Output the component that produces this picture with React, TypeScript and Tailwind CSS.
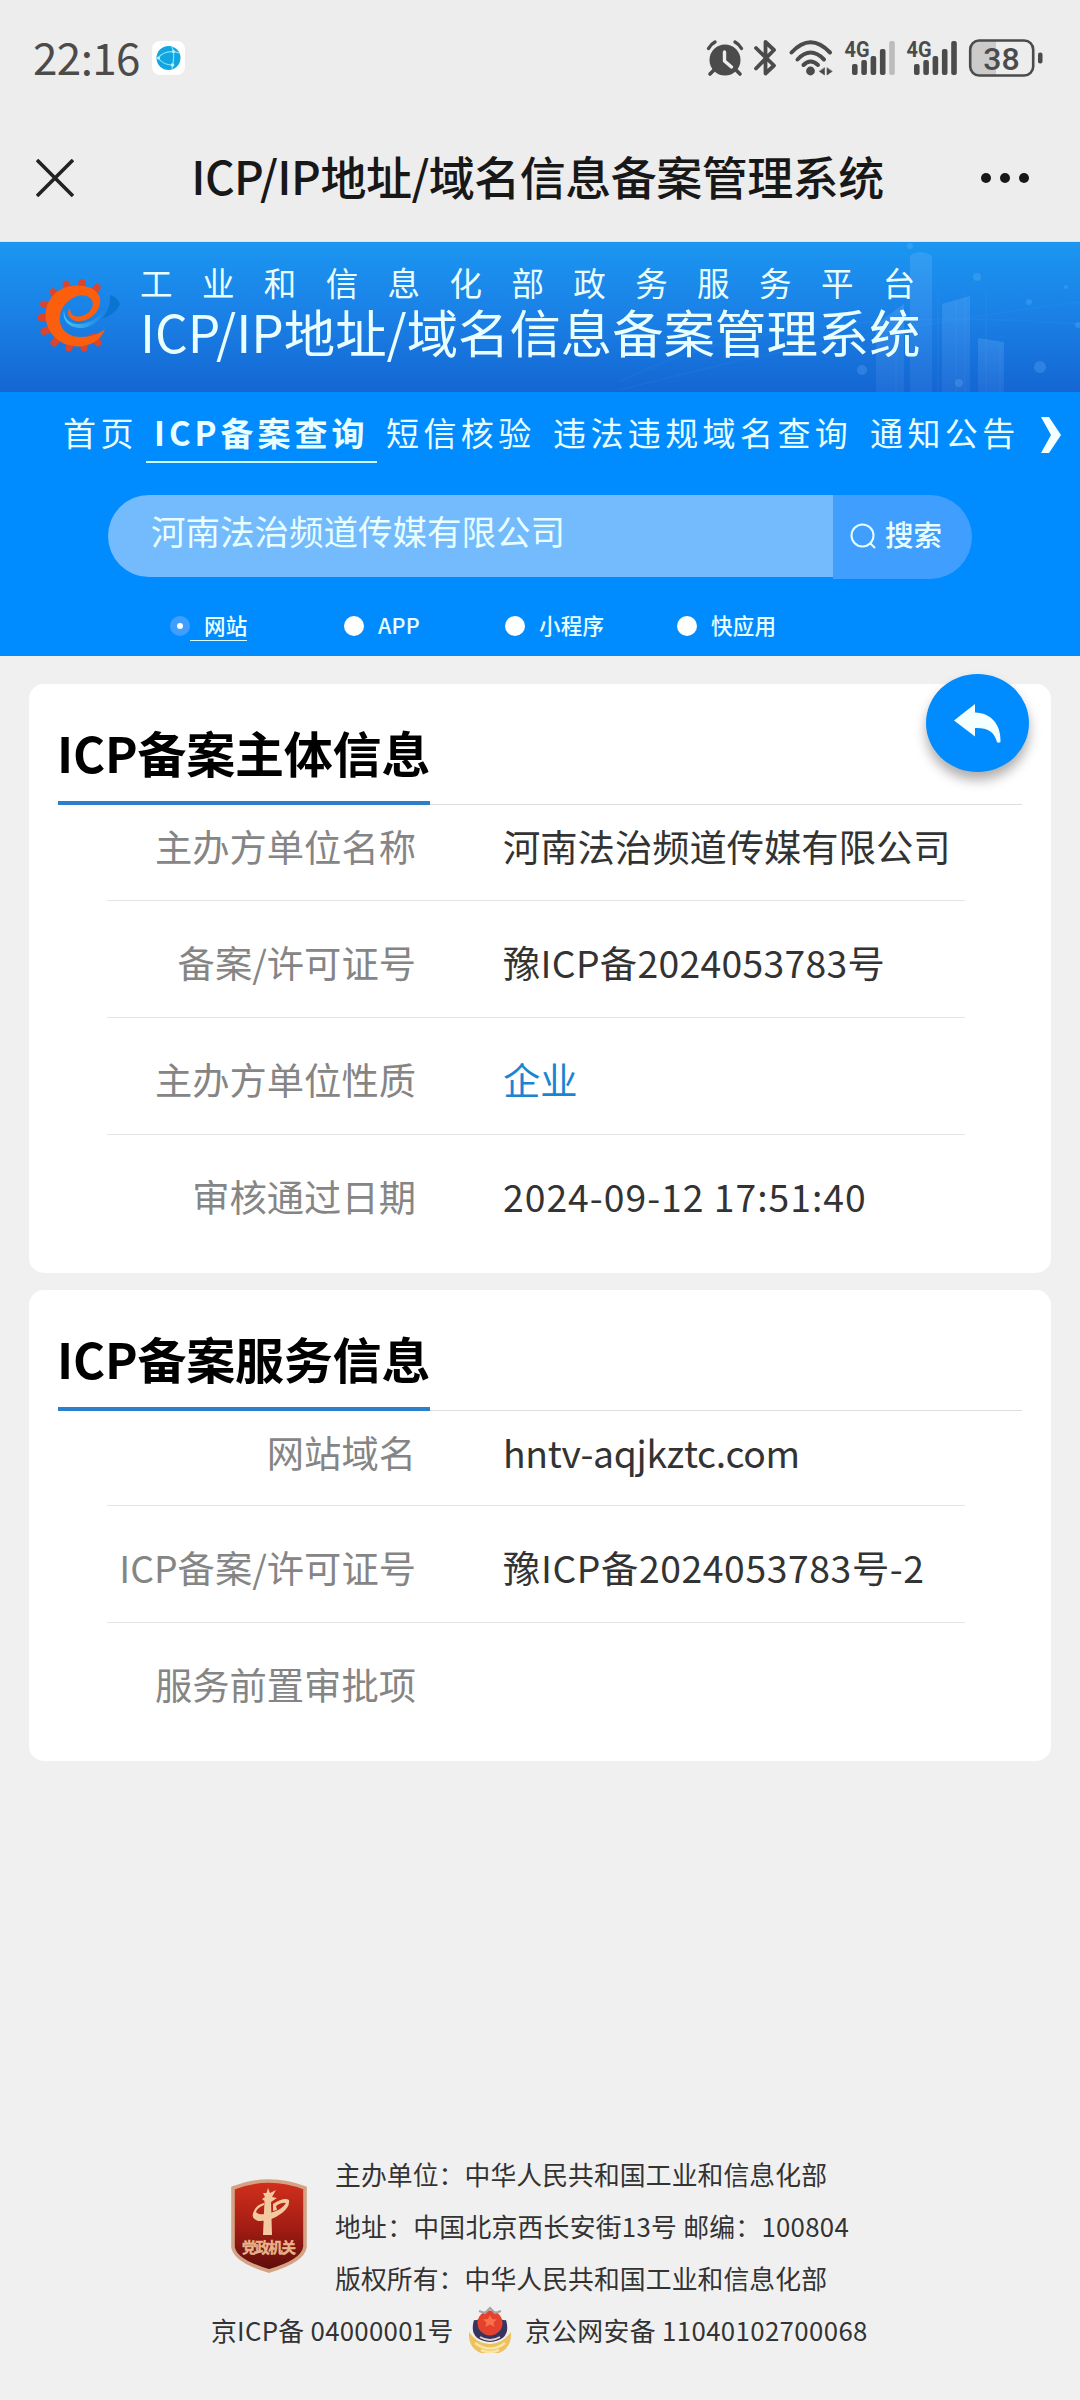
import React from "react"
import {useState} from 'react'

const navItems = [
  { name: '首页', className: 'w-[92px]' },
  { name: 'ICP备案查询', className: 'w-[231px]' },
  { name: '短信核验', className: 'w-[167px]' },
  { name: '违法违规域名查询', className: 'w-[317px]' },
  { name: '通知公告', className: 'w-[170px]' },
];

const searchTypes = [
  { name: '网站', className: 'w-[174px]' },
  { name: 'APP', className: 'w-[161px]' },
  { name: '小程序', className: 'w-[172px]' },
  { name: '快应用', className: 'w-[120px]' },
];

const subjectInfo = [
  { label: '主办方单位名称', value: '河南法治频道传媒有限公司', className: 'text-[#333]' },
  { label: '备案/许可证号', value: '豫ICP备2024053783号', className: 'text-[#333] tracking-[0.3px]' },
  { label: '主办方单位性质', value: '企业', className: 'text-[#1b84d1]' },
  { label: '审核通过日期', value: '2024-09-12 17:51:40', className: 'text-[#333] tracking-[1px]' },
];

const serviceInfo = [
  { label: '网站域名', value: 'hntv-aqjkztc.com', className: 'text-[#333] tracking-[-0.3px]' },
  { label: 'ICP备案/许可证号', value: '豫ICP备2024053783号-2', className: 'text-[#333] tracking-[0.6px]' },
  { label: '服务前置审批项', value: '', className: 'text-[#333]' },
];

function Signal({ full }: { full?: boolean }) {
  return (
    <svg className="overflow-visible" width="52" height="38" viewBox="0 0 52 38" fill="#4b4b4b">
      <text x="0.5" y="18" fontSize="22" fontWeight="700" fontFamily="Roboto, sans-serif" textLength="25" lengthAdjust="spacingAndGlyphs">4G</text>
      <rect x="8" y="25" width="5.6" height="11" rx="2" />
      <rect x="17.3" y="21" width="5.6" height="15" rx="2" />
      <rect x="26.6" y="17" width="5.6" height="19" rx="2" />
      <rect x="35.9" y="10" width="5.6" height="26" rx="2" />
      <rect x="45.2" y="2" width="5.6" height="34" rx="2" fill={full ? '#4b4b4b' : '#bcbcbc'} />
    </svg>
  )
}

function StatusBar() {
  return (
    <div className="flex h-[115px] items-center pl-[33px] pr-[36px]">
      <span className="mt-[-3px] w-[119px] text-[44px] leading-none tracking-[-0.6px] text-[#4b4b4b]">22:16</span>
      <svg width="33" height="34" viewBox="0 0 33 34">
        <rect width="33" height="34" rx="8" fill="#fff" />
        <circle cx="16.5" cy="17" r="12" fill="#12a5e2" />
        <g fill="none" stroke="#7fe3f8" strokeWidth="1.2">
          <path d="M6 17C11 11 18 9 27 12M6 17C10 22 15 24 20 24M20 6C23 12 22 19 20 28" />
        </g>
        <circle cx="6.5" cy="17" r="1.6" fill="#b4f1ff" />
        <circle cx="20.5" cy="24" r="1.8" fill="#b4f1ff" />
        <circle cx="21.5" cy="10.5" r="1.6" fill="#b4f1ff" />
      </svg>

      <div className="ml-auto flex items-center">
        {/* alarm */}
        <svg width="38" height="38" viewBox="0 0 38 38" fill="none" stroke="#4b4b4b" strokeLinecap="round">
          <circle cx="19" cy="21" r="15.5" fill="#4b4b4b" stroke="none" />
          <path d="M8 31l-4 4M30 31l4 4" strokeWidth="3.6" />
          <path d="M2.500 9.500Q5 5 9 3M35.500 9.500Q33 5 29 3" strokeWidth="3.4" />
          <path d="M18.500 13v9l7 6" stroke="#ededed" strokeWidth="3.4" strokeLinejoin="round" />
        </svg>
        {/* bluetooth */}
        <svg className="ml-[9px]" width="24" height="38" viewBox="0 0 24 38" fill="none" stroke="#4b4b4b" strokeWidth="3.8" strokeLinecap="round" strokeLinejoin="round">
          <path d="M3 9L21 26.500L12.500 34.500V3L21 11L3 29.500" />
        </svg>
        {/* wifi */}
        <svg className="ml-[11px]" width="46" height="38" viewBox="0 0 46 38" fill="none" stroke="#4b4b4b" strokeWidth="4" strokeLinecap="round">
          <path d="M3.500 13.500Q22.500 -7 42 13.500" />
          <path d="M9.500 20.500Q22.500 6.500 36 20.500" />
          <path d="M15.500 26Q22.500 19 30 26" />
          <circle cx="22.500" cy="32" r="4.400" fill="#4b4b4b" stroke="none" />
          <path d="M36.500 29v7l-5-3.500zM39 29v7l5-3.500z" fill="#4b4b4b" strokeWidth="0.600" />
        </svg>
        <div className="ml-[10px] flex"><Signal /></div>
        <div className="ml-[10px] flex"><Signal full /></div>
        {/* battery */}
        <svg className="ml-[10px] overflow-visible" width="76" height="38" viewBox="0 0 76 38">
          <path d="M11 2H28V36H11Q3 36 3 28V10Q3 2 11 2" fill="#cbcbcb" />
          <rect x="2.200" y="1.500" width="63" height="35" rx="9" fill="none" stroke="#4b4b4b" strokeWidth="2.600" />
          <rect x="70" y="13.500" width="4.500" height="11" rx="2" fill="#4b4b4b" />
          <text x="33.500" y="30.500" textAnchor="middle" fontSize="32" fontWeight="500" fontFamily="Roboto, sans-serif" fill="#4b4b4b">38</text>
        </svg>
      </div>
    </div>
  )
}

function TitleBar() {
  return (
    <div className="flex h-[126px] items-center justify-between pl-[36px] pr-[51px]">
      <svg width="38" height="38" viewBox="0 0 38 38" stroke="#222" strokeWidth="3.6">
        <path d="M1 1L37 37M37 1L1 37" />
      </svg>
      <h1 className="ml-[20px] mt-[-6px] whitespace-nowrap text-[46px] font-medium leading-none tracking-[-0.5px] text-[#181818]">ICP/IP地址/域名信息备案管理系统</h1>
      <svg width="48" height="12" viewBox="0 0 48 12" fill="#181818">
        <circle cx="5" cy="6" r="5" />
        <circle cx="24" cy="6" r="5" />
        <circle cx="43" cy="6" r="5" />
      </svg>
    </div>
  )
}

function Logo() {
  return (
    <svg width="88" height="80" viewBox="0 0 88 80">
      <defs>
        <linearGradient id="swoosh" x1="0" y1="0" x2="1" y2="0">
          <stop offset="0" stopColor="#4cc3ee" />
          <stop offset="1" stopColor="#1a86e6" />
        </linearGradient>
      </defs>
      <path d="M74 17Q81 19 84 26Q80 36 66 41Q75 30 74 17" fill="#0b74d0" />
      <path d="M28 32C28 41 34 47 44 46C54 45 62 40 68 32C66 42 54 51 43 50C32 49 26 42 28 32" fill="url(#swoosh)" />
      <g stroke="#d9452f" strokeWidth="7" strokeLinecap="round">
        <path d="M61 9.500L58 14M46 4.500L45 11M30 6L32 12M17 14L22 19M7.500 26L14 28M5 39.500H12M8 53.500L14 51M18 65L22 60M33 70L35 64M48 70L47 64M62 65L57 59" />
      </g>
      <path d="M69 51C64 67 40 75 22 62C5 49 6 24 22 13C36 4 60 6 64 20C66 34 52 45 40 43C32 41 30 34 34 30C34 37 39 40 46 38C56 35 60 25 54 20C46 13 32 20 26 31C19 46 29 59 44 59C55 59 63 56 69 51" fill="#fb5f0d" />
    </svg>
  )
}

function Banner() {
  return (
    <div className="relative flex h-[151px] border-t border-[#c4eef4] bg-gradient-to-b from-[#1b96f1] via-[#1a80e6] to-[#1566d2] pl-[36px] pt-[36px]">
      <svg className="absolute right-0 top-0" width="460" height="150" viewBox="0 0 460 150">
        <defs>
          <linearGradient id="tower" x1="0" y1="0" x2="0" y2="1">
            <stop offset="0" stopColor="#8cc8ff" stopOpacity="0.2" />
            <stop offset="1" stopColor="#8cb8ff" stopOpacity="0.09" />
          </linearGradient>
        </defs>
        <g fill="url(#tower)">
          <path d="M290 14Q300 6 312 14V150H290z" />
          <path d="M256 82L284 62V150H256z" />
          <path d="M322 62L350 54V150H322z" />
          <path d="M358 96L384 100V150H358z" />
        </g>
        <path d="M276 60V150M318 50V150M336 60V150M345 50V150M366 50V150M380 102V150" stroke="#9acbff" strokeOpacity="0.08" />
        <path d="M0 140Q150 60 460 82M0 148Q220 90 460 60" fill="none" stroke="#6fc2ff" strokeOpacity="0.05" strokeWidth="2" />
        <g fill="#8ecbff" fillOpacity="0.2">
          <circle cx="242" cy="128" r="5" />
          <circle cx="420" cy="125" r="6" />
          <circle cx="357" cy="35" r="4" />
          <circle cx="409" cy="60" r="3" />
          <circle cx="446" cy="45" r="2" />
          <circle cx="458" cy="83" r="3" />
          <circle cx="290" cy="4" r="3" />
          <circle cx="339" cy="141" r="4" />
        </g>
      </svg>
      <Logo />
      <div className="relative ml-[16px] mt-[-13px] whitespace-nowrap text-[#e9ffff]">
        <p className="h-[34px] text-[32.5px] leading-[34px] tracking-[29.4px]">工业和信息化部政务服务平台</p>
        <p className="mt-[5px] text-[51.400px] leading-[54px]">ICP/IP地址/域名信息备案管理系统</p>
      </div>
    </div>
  )
}

function InfoCard({ title, rows, className, firstRowClass }) {
  return (
    <section className={'mx-[29px] rounded-[15px] bg-white px-[29px] ' + className}>
      <div className="flex h-[121px] border-b border-[#dcdfe0]">
        <h2 className="-mb-px w-[372px] whitespace-nowrap border-b-4 border-[#2a80cb] pt-[41px] text-[49px] font-bold leading-[54px] tracking-[-0.2px] text-black -indent-[1px]">{title}</h2>
      </div>
      <div className="ml-[49px] mr-[57px]">
        {rows.map((row, index) => (
          <div
            key={row.label}
            className={
              'flex whitespace-nowrap text-[37.3px] leading-[40px] ' +
              (index === 0 ? firstRowClass + ' pt-[21px] ' : 'h-[117px] pt-[41px] ') +
              (index < rows.length - 1 ? 'border-b border-[#e3e4e6]' : '')
            }
          >
            <span className="w-[309px] text-right text-[#858585]">{row.label}</span>
            <span className={'ml-[87px] ' + row.className}>{row.value}</span>
          </div>
        ))}
      </div>
    </section>
  )
}

function Shield() {
  return (
    <svg width="78" height="94" viewBox="0 0 78 94">
      <defs>
        <linearGradient id="shield" x1="0" y1="0" x2="0" y2="1">
          <stop offset="0" stopColor="#d2301c" />
          <stop offset="0.5" stopColor="#a51d14" />
          <stop offset="1" stopColor="#5c0d0b" />
        </linearGradient>
      </defs>
      <path d="M39 2Q57 2 75 9V68Q73 82 39 92Q5 82 3 68V9Q21 2 39 2z" fill="url(#shield)" stroke="#d3a383" strokeWidth="3.600" />
      <g fill="#f3c9a2">
        <path d="M33 56L34.500 22L32 20L35 18L33 14L36.500 14L38 9L40 14L46 11L42 18L47 19L41 23L42 56z" />
        <path d="M24 32Q26 26 34 24V26Q27 29 26 33Q29 37 40 34Q52 31 56 24Q52 23 46 27L47 31L43 32V25Q54 18 59 21Q60 28 52 34Q40 43 28 42Q20 39 24 32" />
      </g>
      <text x="39" y="74" textAnchor="middle" fontSize="14.500" fontWeight="700" fill="#e8b48c" stroke="#e8b48c" strokeWidth="0.400" textLength="54">党政机关</text>
    </svg>
  )
}

function PoliceBadge() {
  return (
    <svg width="44" height="48" viewBox="0 0 44 48">
      <path d="M1 26Q0 42 13 47H31Q44 42 43 26Q34 38 22 38Q9 38 1 26" fill="#eec15e" />
      <path d="M7 37Q22 48 37 37M13 44Q22 48 31 44" fill="none" stroke="#fae5a8" strokeWidth="2.500" />
      <path d="M6 14Q10 15 22 8Q34 15 38 14Q44 34 22 36Q0 34 6 14" fill="#39345f" />
      <circle cx="22" cy="17" r="12.500" fill="#e5422d" />
      <path d="M11 5L17 7L22 2L27 7L33 5" fill="none" stroke="#a4a4a8" strokeWidth="2" />
      <path d="M22 9l2 4 5 .5-3.500 3 1 4.500-4.500-2.500-4.500 2.500 1-4.500-3.500-3 5-.5z" fill="#fb704b" />
      <path d="M12 31Q22 37 32 31" fill="none" stroke="#e3cfc5" strokeWidth="2" />
    </svg>
  )
}

export default function App() {
  const [activeNav, setActiveNav] = useState('ICP备案查询');
  const [searchType, setSearchType] = useState('网站');
  const [keyword, setKeyword] = useState('河南法治频道传媒有限公司');

  return (
    <div className="flex h-[2400px] w-[1080px] flex-col overflow-hidden bg-[#f0f0f1] font-['Noto_Sans_CJK_SC',sans-serif]">
      <header className="bg-[#ededed]">
        <StatusBar />
        <TitleBar />
      </header>
      <Banner />

      <div className="h-[264px] bg-[#008cff] text-[#e9ffff]">
        <nav className="flex h-[103px] items-start pl-[54px] pt-[22px]">
          {navItems.map((item) => (
            <button
              key={item.name}
              onClick={() => setActiveNav(item.name)}
              className={
                'h-[49px] shrink-0 whitespace-nowrap text-left text-[33px] leading-[36px] ' +
                item.className +
                (item.name === activeNav
                  ? ' border-b-2 border-[#c9fbff] pl-[8px] pb-[11px] font-bold tracking-[4px]'
                  : ' pl-[9px] pb-[13px] tracking-[4.4px]')
              }
            >
              {item.name}
            </button>
          ))}
          <svg className="mt-[3px] ml-[9px]" width="22" height="36" viewBox="0 0 22 36" fill="#f4ffff">
            <path d="M1 0H9L21 18L9 36H1L11 18z" />
          </svg>
        </nav>

        <div className="ml-[108px] flex h-[84px] items-start">
          <input
            className="h-[82px] w-[725px] rounded-l-full bg-[#73bbfc] pb-[12px] pl-[43px] text-[34.5px] outline-none"
            value={keyword}
            onChange={(e) => setKeyword(e.target.value)}
          />
          <button className="flex h-[84px] w-[139px] items-center rounded-r-full bg-[#409eff] pb-[3px] pl-[17px] text-[28.500px] font-medium">
            <svg width="26" height="26" viewBox="0 0 26 26" fill="none" stroke="#e9ffff" strokeWidth="2">
              <circle cx="12.5" cy="12.5" r="11" />
              <path d="M20 20L25 25" />
            </svg>
            <span className="ml-[9px] mt-[-2px]">搜索</span>
          </button>
        </div>

        <div className="flex pl-[170px] pt-[32px]">
          {searchTypes.map((type) => (
            <label key={type.name} className={'flex h-[30px] items-center text-[21.5px] font-medium leading-[26px] tracking-[0.2px] ' + type.className}>
              <input type="radio" className="sr-only" checked={type.name === searchType} onChange={() => setSearchType(type.name)} />
              <span className={'flex size-5 items-center justify-center rounded-full ' + (type.name === searchType ? 'bg-[#409eff]' : 'bg-white')}>
                {type.name === searchType && <span className="size-1.5 rounded-full bg-white" />}
              </span>
              <span className={'h-[29px] whitespace-nowrap pl-[14px] ' + (type.name === searchType ? 'border-b border-[#d8ffff]' : '')}>{type.name}</span>
            </label>
          ))}
        </div>
      </div>

      <main className="relative">
        <InfoCard title="ICP备案主体信息" rows={subjectInfo} className="mt-[28px] h-[589px]" firstRowClass="h-[96px]" />
        <InfoCard title="ICP备案服务信息" rows={serviceInfo} className="mt-[17px] h-[471px]" firstRowClass="h-[95px]" />
        {/* back button floats over the card corner */}
        <button className="absolute right-[51px] top-[18px] flex h-[98px] w-[103px] items-center justify-center rounded-[50%] bg-[#008cff] shadow-[0_8px_12px_rgba(60,50,50,0.4)]">
          <svg width="47" height="39" viewBox="0 0 47 39" fill="#f4ffff">
            <path d="M0 16.500L21 0V8.500C37 9 47 20 46.500 38C45 39 44 39 43 38C40 27 33 23.500 21 24V32.500z" />
          </svg>
        </button>
      </main>

      <footer className="mt-auto h-[252px] whitespace-nowrap text-[25.8px] text-[#333]">
        <div className="flex pl-[230px]">
          <div className="pt-[31px]"><Shield /></div>
          <div className="ml-[27px] leading-[52px] tracking-[0.1px]">
            <p>主办单位：中华人民共和国工业和信息化部</p>
            <p className="tracking-[0.28px]">地址：中国北京西长安街13号 邮编：100804</p>
            <p>版权所有：中华人民共和国工业和信息化部</p>
          </div>
        </div>
        <div className="flex h-[52px] items-center pl-[211px] tracking-[0.3px]">
          <span className="w-[257px]">京ICP备 04000001号</span>
          <PoliceBadge />
          <span className="ml-[13px] tracking-[0.38px]">京公网安备 11040102700068</span>
        </div>
      </footer>
    </div>
  )
}
